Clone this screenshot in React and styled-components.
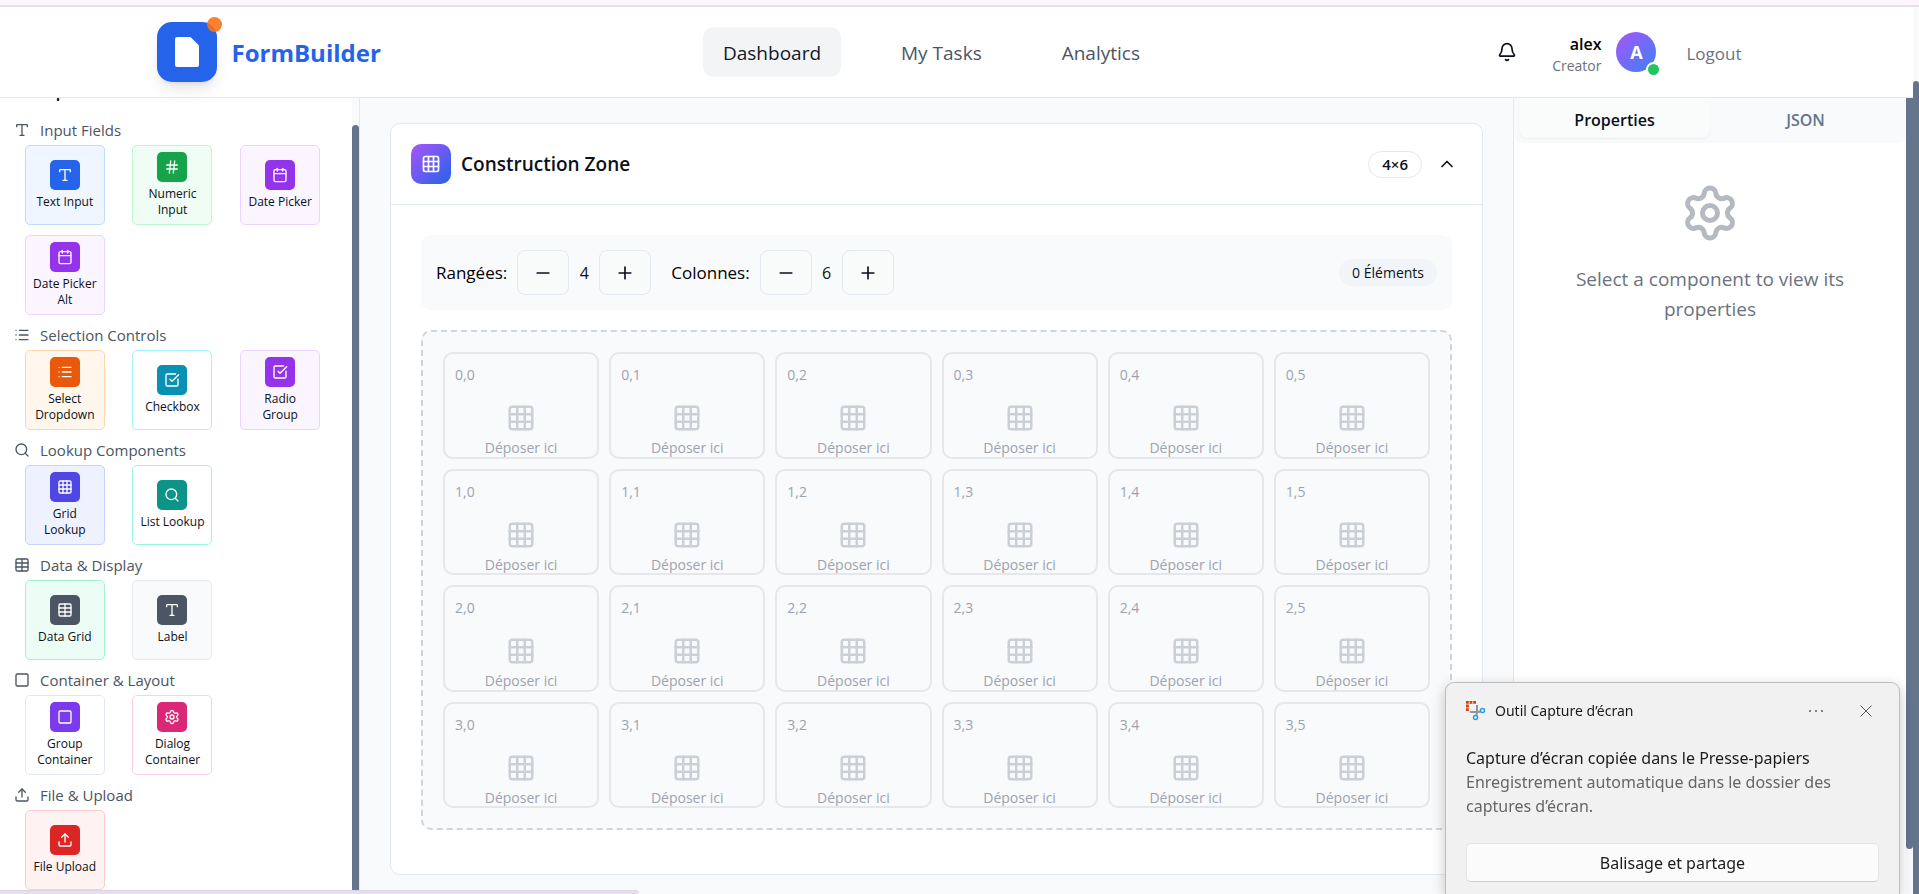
import React from "react";
import styled, { createGlobalStyle } from "styled-components";
import {
  Type,
  Hash,
  Calendar,
  List,
  SquareCheckBig,
  Search,
  Grid3x3,
  Table,
  Square,
  Upload,
  Settings,
  Bell,
  ChevronUp,
  Minus,
  Plus,
} from "lucide-react";

const GlobalStyle = createGlobalStyle`
  *, *::before, *::after { box-sizing: border-box; }
  body {
    margin: 0;
    overflow: hidden;
    background: #fff;
    color: #0b1020;
    font-family: "Open Sans", "Noto Sans", sans-serif;
    font-size: 14px;
  }
  button { font: inherit; color: inherit; cursor: pointer; }
  h1, h2, h3, p { margin: 0; }
`;

const Shell = styled.div`
  display: flex;
  flex-direction: column;
  height: 100vh;
`;

const TopStrip = styled.div`
  flex: none;
  height: 7px;
  background: #fdf6ff;
  border-bottom: 2px solid #e8dfe9;
`;

const Viewport = styled.div`
  flex: 1;
  min-height: 0;
  display: flex;
`;

const Page = styled.div`
  flex: 1;
  min-width: 0;
  display: flex;
  flex-direction: column;
`;

const ScrollTrack = styled.div`
  flex: none;
  width: ${(p) => p.$width}px;
  padding-top: ${(p) => p.$start}px;
  padding-bottom: ${(p) => p.$end}px;
  background: #f8fafc;
`;

const ScrollThumb = styled.div`
  height: 100%;
  border-radius: ${(p) => p.$radius || "4px"};
  background: #64748b;
`;

/* ---------- header ---------- */

const Header = styled.header`
  flex: none;
  height: 91px;
  border-bottom: 1px solid #e5e7eb;
  background: #fff;
`;

const HeaderInner = styled.div`
  display: flex;
  align-items: center;
  justify-content: space-between;
  max-width: 1600px;
  height: 100%;
  margin: 0 auto;
`;

const Brand = styled.a`
  display: flex;
  align-items: center;
  gap: 15px;
  color: #2563eb;
  font-size: 24px;
  font-weight: 700;
  text-decoration: none;
`;

const BrandMark = styled.span`
  position: relative;
  display: grid;
  place-items: center;
  width: 60px;
  height: 60px;
  border-radius: 15px;
  background: #2563eb;
  box-shadow: 0 10px 15px -3px rgba(0, 0, 0, 0.1), 0 4px 6px -4px rgba(0, 0, 0, 0.1);
`;

const BrandDot = styled.span`
  position: absolute;
  top: -5px;
  right: -5px;
  width: 15px;
  height: 15px;
  border-radius: 50%;
  background: #f97316;
  opacity: 0.9;
`;

const Nav = styled.nav`
  display: flex;
  gap: 40px;
`;

const NavLink = styled.a`
  height: 50px;
  padding: 0 20px;
  border-radius: 10px;
  background: ${(p) => (p.$active ? "#f3f4f6" : "transparent")};
  color: ${(p) => (p.$active ? "#111827" : "#4b5563")};
  font-size: 19px;
  line-height: 52px;
  text-decoration: none;
`;

const UserArea = styled.div`
  display: flex;
  align-items: center;
`;

const BellButton = styled.button`
  display: grid;
  place-items: center;
  width: 50px;
  height: 50px;
  margin-right: 20px;
  padding: 0;
  border: 0;
  background: none;
`;

const UserText = styled.div`
  display: flex;
  flex-direction: column;
  margin-right: 15px;
  padding-top: 5px;
  text-align: right;
`;

const UserName = styled.span`
  color: #000;
  font-size: 16px;
  font-weight: 600;
  line-height: 22px;
`;

const UserRole = styled.span`
  color: #6b7280;
  font-size: 14px;
  line-height: 22px;
`;

const Avatar = styled.div`
  position: relative;
  display: grid;
  place-items: center;
  width: 40px;
  height: 40px;
  margin-right: 15px;
  border-radius: 50%;
  background: linear-gradient(135deg, #a855f7, #3b82f6);
  color: #fff;
  font-size: 18px;
  font-weight: 700;
`;

const OnlineDot = styled.span`
  position: absolute;
  right: -5px;
  bottom: -5px;
  width: 15px;
  height: 15px;
  border: 2px solid #fff;
  border-radius: 50%;
  background: #22c55e;
`;

const LogoutButton = styled.button`
  padding: 11px 15px 9px;
  border: 0;
  background: none;
  color: #6b7280;
  font-size: 17px;
`;

/* ---------- palette ---------- */

const Body = styled.div`
  flex: 1;
  min-height: 0;
  display: grid;
  grid-template-columns: 360px minmax(0, 1fr) 393px 7px;
`;

const Sidebar = styled.aside`
  display: flex;
  min-height: 0;
  overflow: hidden;
  border-right: 1px solid #e2e8f0;
`;

const Palette = styled.div`
  flex: 1;
  display: flex;
  flex-direction: column;
`;

/* The list is scrolled: only the foot of its title is in view. */
const PaletteTitle = styled.h2`
  flex: none;
  display: flex;
  align-items: flex-end;
  height: 6px;
  margin-bottom: 11px;
  padding-left: 16px;
  overflow: hidden;
  font-size: 18px;
  font-weight: 600;
  line-height: 28px;
`;

const Section = styled.section`
  flex: none;
  padding-bottom: 5px;
`;

const SectionHeading = styled.h3`
  display: flex;
  align-items: center;
  gap: 10px;
  height: 30px;
  padding-left: 14px;
  color: #4b5563;
  font-size: 15px;
  font-weight: 400;
`;

const TileGrid = styled.div`
  display: grid;
  grid-template-columns: repeat(3, 1fr);
  justify-items: center;
  row-gap: 10px;
  padding: 0 18px 0 11px;
`;

const Tile = styled.button`
  display: flex;
  flex-direction: column;
  align-items: center;
  justify-content: center;
  gap: 4px;
  width: 80px;
  height: 80px;
  padding: 0 6px;
  border: 1px solid ${(p) => p.$line};
  border-radius: 5px;
  background: ${(p) => p.$bg};
  color: #0b1020;
  font-size: 12px;
  font-weight: 500;
  line-height: 16px;
`;

const TileIcon = styled.span`
  display: grid;
  place-items: center;
  flex: none;
  width: 30px;
  height: 30px;
  border-radius: 5px;
  background: ${(p) => p.$fill};
  color: #fff;
`;

/* ---------- canvas ---------- */

const Canvas = styled.main`
  padding: 25px 30px 0;
  overflow: hidden;
  background: #f8fafc;
`;

const Card = styled.section`
  border: 1px solid #e2e8f0;
  border-radius: 10px;
  background: #fff;
`;

const CardHeader = styled.div`
  display: flex;
  align-items: center;
  justify-content: space-between;
  padding: 20px;
  border-bottom: 1px solid #e2e8f0;
`;

const Cluster = styled.div`
  display: flex;
  align-items: center;
  gap: ${(p) => p.$gap || 10}px;
`;

const CardIcon = styled.span`
  display: grid;
  place-items: center;
  width: 40px;
  height: 40px;
  border-radius: 10px;
  background: linear-gradient(135deg, #a855f7, #2563eb);
  color: #fff;
`;

const CardTitle = styled.h1`
  font-size: 19px;
  font-weight: 600;
`;

const Pill = styled.span`
  padding: 0 13px;
  border: ${(p) => (p.$outlined ? "1px solid #e2e8f0" : "0")};
  border-radius: 14px;
  background: ${(p) => (p.$outlined ? "#fff" : "#f1f5f9")};
  font-size: ${(p) => (p.$outlined ? 15 : 14)}px;
  font-weight: ${(p) => (p.$outlined ? 600 : 500)};
  line-height: ${(p) => (p.$outlined ? 25 : 27)}px;
`;

const CollapseButton = styled.button`
  display: grid;
  place-items: center;
  width: 30px;
  height: 30px;
  padding: 0;
  border: 0;
  background: none;
`;

const CardBody = styled.div`
  padding: 30px 30px 44px;
`;

const Toolbar = styled.div`
  display: flex;
  align-items: center;
  justify-content: space-between;
  margin-bottom: 20px;
  padding: 15px;
  border-radius: 10px;
  background: #f8fafc;
`;

const Stepper = styled.div`
  display: flex;
  align-items: center;
  gap: 10px;
`;

const StepperLabel = styled.span`
  color: #000;
  font-size: 17px;
  font-weight: 500;
`;

const StepperValue = styled.output`
  width: 10px;
  text-align: center;
  font-size: 16px;
`;

const StepButton = styled.button`
  display: grid;
  place-items: center;
  width: 52px;
  height: 45px;
  padding: 0;
  border: 1px solid #e2e8f0;
  border-radius: 8px;
  background: #f9fbfa;
`;

const DropGrid = styled.div`
  display: grid;
  grid-template-columns: repeat(6, minmax(0, 1fr));
  grid-auto-rows: 1fr;
  gap: 10px;
  height: 500px;
  padding: 20px;
  border: 2px dashed #d1d5db;
  border-radius: 10px;
  background: #f8fafc;
`;

const Cell = styled.div`
  display: flex;
  flex-direction: column;
  padding: 10px;
  border: 2px solid #e5e7eb;
  border-radius: 10px;
  background: #f9fafb;
  color: #9ca3af;
  overflow: hidden;
`;

const CellCoord = styled.span`
  font-size: 14px;
  line-height: 22px;
`;

const CellHint = styled.div`
  display: flex;
  flex-direction: column;
  align-items: center;
  gap: 5px;
  padding-top: 17px;
  font-size: 14px;
  line-height: 20px;

  svg { flex: none; color: #cbd0d7; }
`;

/* ---------- inspector ---------- */

const Inspector = styled.aside`
  border-left: 1px solid #e2e8f0;
  background: #fff;
`;

const TabList = styled.div`
  display: grid;
  grid-template-columns: 1fr 1fr;
  padding: 0 5px 5px;
  border-radius: 0 0 8px 8px;
  background: #f8fafc;
`;

const Tab = styled.button`
  height: 40px;
  padding: 3px 0 0;
  border: 0;
  border-radius: 8px;
  background: ${(p) => (p.$active ? "#fafcfb" : "transparent")};
  box-shadow: ${(p) => (p.$active ? "0 1px 2px rgba(0, 0, 0, 0.06)" : "none")};
  color: ${(p) => (p.$active ? "#0b1020" : "#64748b")};
  font-size: 16px;
  font-weight: 600;
`;

const EmptyState = styled.div`
  display: flex;
  flex-direction: column;
  align-items: center;
  gap: 21px;
  padding: 40px 50px;
  color: #6b7280;
  font-size: 19px;
  line-height: 30px;
  text-align: center;

  svg { color: #b5b9c1; }
`;

/* ---------- overlays ---------- */

const StatusBar = styled.div`
  position: fixed;
  left: 0;
  bottom: 0;
  width: 639px;
  height: 4px;
  border-radius: 0 4px 0 0;
  background: #e8def2;
  border-top: 1px solid #dcd6e0;
`;

const Toast = styled.div`
  position: fixed;
  right: 19px;
  bottom: 0;
  width: 455px;
  padding: 13px 20px 12px;
  border: 1px solid #bdbdbd;
  border-bottom: 0;
  border-radius: 9px 9px 0 0;
  background: #f1f1f1;
  box-shadow: 0 4px 14px rgba(0, 0, 0, 0.22);
  color: #1b1b1b;
  font-family: "Noto Sans", "Open Sans", sans-serif;
  font-size: 16px;
  line-height: 24px;
`;

const ToastBar = styled.div`
  display: flex;
  align-items: center;
  height: 30px;
  margin-bottom: 20px;
  font-size: 14px;
`;

const ToastApp = styled.span`
  flex: 1;
  margin-left: 9px;
`;

const ToastIconButton = styled.button`
  display: grid;
  place-items: center;
  width: 26px;
  height: 30px;
  margin-left: 24px;
  padding: 0;
  border: 0;
  background: none;
`;

const ToastText = styled.p`
  color: ${(p) => (p.$muted ? "#666" : "#1b1b1b")};
  font-size: 16px;
`;

const ToastAction = styled.button`
  display: block;
  width: 100%;
  height: 39px;
  margin-top: 25px;
  border: 1px solid #e5e5e5;
  border-bottom-color: #cfcfcf;
  border-radius: 5px;
  background: #fbfbfb;
  font-size: 16px;
`;

const SnipIcon = () => (
  <svg width="20" height="20" viewBox="0 0 20 20" fill="none" aria-hidden="true">
    <path d="M11 4v8l-1 3M4 11h8l3-.8" stroke="#8f959b" strokeWidth="2" />
    <path
      d="M0 0h2.800v2.800H0zM3.600 0h2.800v2.800H3.600zM7.200 0H10v2.800H7.200zM0 3.600h2.800v2.800H0zM0 7.200h2.800V10H0z"
      fill="#d9400f"
    />
    <circle cx="16.5" cy="9.5" r="2" fill="#fff" stroke="#1e9fe8" strokeWidth="1.5" />
    <circle cx="9.5" cy="16.5" r="2" fill="#fff" stroke="#1e9fe8" strokeWidth="1.5" />
  </svg>
);

const purple = { $fill: "#9333ea", $bg: "#faf5ff", $line: "#e9d5ff" };

const sections = [
  {
    title: "Input Fields",
    Icon: Type,
    items: [
      ["Text Input", Type, { $fill: "#2563eb", $bg: "#eff6ff", $line: "#bfdbfe" }],
      ["Numeric Input", Hash, { $fill: "#16a34a", $bg: "#f0fdf4", $line: "#bbf7d0" }],
      ["Date Picker", Calendar, purple],
      ["Date Picker Alt", Calendar, purple],
    ],
  },
  {
    title: "Selection Controls",
    Icon: List,
    items: [
      ["Select Dropdown", List, { $fill: "#ea580c", $bg: "#fff7ed", $line: "#fed7aa" }],
      ["Checkbox", SquareCheckBig, { $fill: "#0891b2", $bg: "#fff", $line: "#a5f3fc" }],
      ["Radio Group", SquareCheckBig, purple],
    ],
  },
  {
    title: "Lookup Components",
    Icon: Search,
    items: [
      ["Grid Lookup", Grid3x3, { $fill: "#4f46e5", $bg: "#eef2ff", $line: "#c7d2fe" }],
      ["List Lookup", Search, { $fill: "#0d9488", $bg: "#fff", $line: "#99f6e4" }],
    ],
  },
  {
    title: "Data & Display",
    Icon: Table,
    items: [
      ["Data Grid", Table, { $fill: "#4b5563", $bg: "#ecfdf5", $line: "#a7f3d0" }],
      ["Label", Type, { $fill: "#4b5563", $bg: "#f9fafb", $line: "#e5e7eb" }],
    ],
  },
  {
    title: "Container & Layout",
    Icon: Square,
    items: [
      ["Group Container", Square, { $fill: "#7c3aed", $bg: "#fff", $line: "#e2e8f0" }],
      ["Dialog Container", Settings, { $fill: "#db2777", $bg: "#fff", $line: "#fbcfe8" }],
    ],
  },
  {
    title: "File & Upload",
    Icon: Upload,
    items: [["File Upload", Upload, { $fill: "#dc2626", $bg: "#fef2f2", $line: "#fecaca" }]],
  },
];

const rows = [0, 1, 2, 3];
const columns = [0, 1, 2, 3, 4, 5];

const CountStepper = ({ id, label, value }) => (
  <Stepper role="group" aria-labelledby={id}>
    <StepperLabel id={id}>{label}</StepperLabel>
    <StepButton aria-label="Moins">
      <Minus size={20} />
    </StepButton>
    <StepperValue>{value}</StepperValue>
    <StepButton aria-label="Plus">
      <Plus size={20} />
    </StepButton>
  </Stepper>
);

export default function App() {
  return (
    <>
      <GlobalStyle />
      <Shell>
        <TopStrip />
        <Viewport>
          <Page>
            <Header>
              <HeaderInner>
                <Brand href="#">
                  <BrandMark>
                    <svg width="24" height="30" viewBox="0 0 24 30" aria-hidden="true">
                      <path d="M2 0h13.500L24 8.500V28a2 2 0 0 1-2 2H2a2 2 0 0 1-2-2V2a2 2 0 0 1 2-2z" fill="#fff" />
                    </svg>
                    <BrandDot />
                  </BrandMark>
                  FormBuilder
                </Brand>
                <Nav>
                  <NavLink href="#dashboard" $active>Dashboard</NavLink>
                  <NavLink href="#tasks">My Tasks</NavLink>
                  <NavLink href="#analytics">Analytics</NavLink>
                </Nav>
                <UserArea>
                  <BellButton aria-label="Notifications">
                    <Bell size={20} />
                  </BellButton>
                  <UserText>
                    <UserName>alex</UserName>
                    <UserRole>Creator</UserRole>
                  </UserText>
                  <Avatar>
                    A
                    <OnlineDot />
                  </Avatar>
                  <LogoutButton>Logout</LogoutButton>
                </UserArea>
              </HeaderInner>
            </Header>

            <Body>
              <Sidebar>
                <Palette>
                  <PaletteTitle>Components</PaletteTitle>
                  {sections.map(({ title, Icon, items }) => (
                    <Section key={title}>
                      <SectionHeading>
                        <Icon size={16} />
                        {title}
                      </SectionHeading>
                      <TileGrid>
                        {items.map(([name, ItemIcon, tone]) => (
                          <Tile key={name} {...tone}>
                            <TileIcon $fill={tone.$fill}>
                              <ItemIcon size={16} />
                            </TileIcon>
                            {name}
                          </Tile>
                        ))}
                      </TileGrid>
                    </Section>
                  ))}
                </Palette>
                <ScrollTrack $width={7} $start={27} $end={3}>
                  <ScrollThumb $radius="4px 4px 0 0" />
                </ScrollTrack>
              </Sidebar>

              <Canvas>
                <Card>
                  <CardHeader>
                    <Cluster>
                      <CardIcon>
                        <Grid3x3 size={20} />
                      </CardIcon>
                      <CardTitle>Construction Zone</CardTitle>
                    </Cluster>
                    <Cluster>
                      <Pill $outlined>4×6</Pill>
                      <CollapseButton aria-label="Collapse">
                        <ChevronUp size={20} />
                      </CollapseButton>
                    </Cluster>
                  </CardHeader>
                  <CardBody>
                    <Toolbar>
                      <Cluster $gap={20}>
                        <CountStepper id="rows-label" label="Rangées:" value={4} />
                        <CountStepper id="columns-label" label="Colonnes:" value={6} />
                      </Cluster>
                      <Pill>0 Éléments</Pill>
                    </Toolbar>
                    <DropGrid>
                      {rows.map((r) =>
                        columns.map((c) => (
                          <Cell key={`${r}-${c}`}>
                            <CellCoord>{`${r},${c}`}</CellCoord>
                            <CellHint>
                              <Grid3x3 size={30} />
                              Déposer ici
                            </CellHint>
                          </Cell>
                        ))
                      )}
                    </DropGrid>
                  </CardBody>
                </Card>
              </Canvas>

              <Inspector>
                <TabList role="tablist">
                  <Tab role="tab" aria-selected="true" $active>Properties</Tab>
                  <Tab role="tab" aria-selected="false">JSON</Tab>
                </TabList>
                <EmptyState>
                  <Settings size={60} />
                  <p>Select a component to view its properties</p>
                </EmptyState>
              </Inspector>

              <ScrollTrack $width={7} $start={0} $end={45}>
                <ScrollThumb $radius="0 0 4px 4px" />
              </ScrollTrack>
            </Body>
          </Page>
          <ScrollTrack $width={6} $start={74} $end={0}>
            <ScrollThumb $radius="4px 4px 0 0" />
          </ScrollTrack>
        </Viewport>
      </Shell>

      <StatusBar />

      <Toast role="status">
        <ToastBar>
          <SnipIcon />
          <ToastApp>Outil Capture d’écran</ToastApp>
          <ToastIconButton aria-label="Options">
            <svg width="14" height="4" viewBox="0 0 14 4" fill="#5c5c5c" aria-hidden="true">
              <circle cx="1" cy="2" r="1" />
              <circle cx="7" cy="2" r="1" />
              <circle cx="13" cy="2" r="1" />
            </svg>
          </ToastIconButton>
          <ToastIconButton aria-label="Fermer">
            <svg width="12" height="12" viewBox="0 0 12 12" stroke="#5c5c5c" aria-hidden="true">
              <path d="M0.500 0.500l11 11M11.500 0.500l-11 11" />
            </svg>
          </ToastIconButton>
        </ToastBar>
        <ToastText>Capture d’écran copiée dans le Presse-papiers</ToastText>
        <ToastText $muted>
          Enregistrement automatique dans le dossier des captures d’écran.
        </ToastText>
        <ToastAction>Balisage et partage</ToastAction>
      </Toast>
    </>
  );
}
